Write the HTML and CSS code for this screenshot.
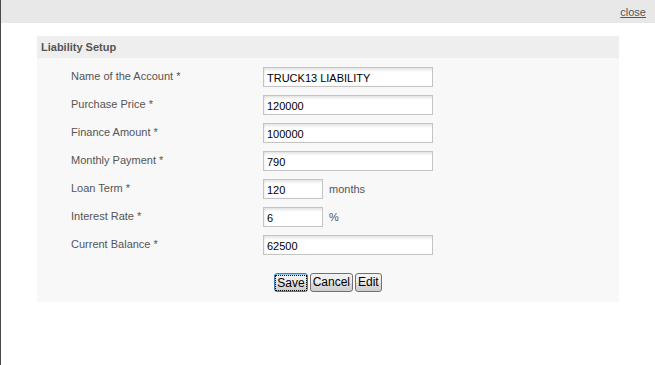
FILE: index.html
```html
<!DOCTYPE html>
<html>
<head>
<meta charset="utf-8">
<link rel="stylesheet" href="styles.css">
</head>
<body>
<div class="dialog">
  <div class="topbar"><a class="close" href="#">close</a></div>
  <div class="panel">
    <div class="panel-head">Liability Setup</div>
    <div class="panel-body">
      <div class="form">
        <label class="lbl">Name of the Account *</label>
        <div class="field"><span class="input wide">TRUCK13 LIABILITY</span></div>
        <label class="lbl">Purchase Price *</label>
        <div class="field"><span class="input wide">120000</span></div>
        <label class="lbl">Finance Amount *</label>
        <div class="field"><span class="input wide">100000</span></div>
        <label class="lbl">Monthly Payment *</label>
        <div class="field"><span class="input wide">790</span></div>
        <label class="lbl">Loan Term *</label>
        <div class="field"><span class="input short">120</span><span class="unit">months</span></div>
        <label class="lbl">Interest Rate *</label>
        <div class="field"><span class="input short">6</span><span class="unit">%</span></div>
        <label class="lbl">Current Balance *</label>
        <div class="field"><span class="input wide">62500</span></div>
      </div>
      <div class="actions">
        <button class="btn btn-focus"><span class="focus-ring">Save</span></button>
        <button class="btn">Cancel</button>
        <button class="btn">Edit</button>
      </div>
    </div>
  </div>
</div>
</body>
</html>
```

FILE: styles.css
```css
html, body {
  margin: 0;
  padding: 0;
  background: #ffffff;
  height: 100%;
}
body {
  font-family: "Liberation Sans", Arial, sans-serif;
  font-size: 11px;
  color: #555555;
}
.dialog {
  border-left: 1px solid #4a4a4a;
  min-height: 365px;
  box-sizing: border-box;
}
.topbar {
  height: 23px;
  background: #e8e8e8;
  display: flex;
  justify-content: flex-end;
  align-items: flex-start;
  padding-right: 9px;
}
.close {
  color: #555555;
  text-decoration: underline;
  font-size: 11px;
  line-height: 13px;
  margin-top: 6px;
}
.panel {
  margin: 13px 0 0 36px;
  width: 582px;
}
.panel-head {
  height: 22px;
  background: #eeeeee;
  font-weight: bold;
  line-height: 22px;
  padding-left: 4px;
  color: #555555;
}
.panel-body {
  background: #f8f8f8;
  padding: 9px 0 10px 0;
}
.form {
  display: grid;
  grid-template-columns: 192px 1fr;
  padding-left: 34px;
  row-gap: 8px;
}
.lbl {
  display: flex;
  align-items: center;
  height: 20px;
  padding-bottom: 3px;
  box-sizing: border-box;
}
.field {
  display: flex;
  align-items: center;
  height: 20px;
}
.input {
  display: block;
  box-sizing: border-box;
  height: 20px;
  border: 1px solid #c4c4c4;
  background: linear-gradient(#e6e6e6 0, #ffffff 4px);
  color: #000000;
  font-size: 11px;
  line-height: 18px;
  padding: 1px 3px 0 3px;
  white-space: nowrap;
  box-shadow: inset 1px 0 2px rgba(0,0,0,0.06);
}
.wide { width: 170px; }
.short { width: 60px; }
.unit {
  margin-left: 6px;
  color: #555555;
}
.actions {
  display: flex;
  justify-content: center;
  gap: 1px;
  margin-top: 18px;
}
.btn {
  font-family: "Liberation Sans", Arial, sans-serif;
  font-size: 12px;
  color: #000000;
  height: 19px;
  padding: 0 2px;
  margin: 0;
  border: 1px solid #707070;
  border-radius: 3px;
  background: linear-gradient(#f2f2f2 0%, #ebebeb 50%, #dddddd 51%, #cfcfcf 100%);
  line-height: 15px;
  cursor: default;
}
.btn + .btn { margin-left: 1px; }
.btn-focus {
  border-color: #3c7fb1;
  box-shadow: inset 0 0 0 1px #8ed1f5;
  padding: 0 1px;
}
.focus-ring {
  display: block;
  outline: 1px dotted #000000;
  outline-offset: 0;
  padding: 0 1px;
  line-height: 14px;
}
```
